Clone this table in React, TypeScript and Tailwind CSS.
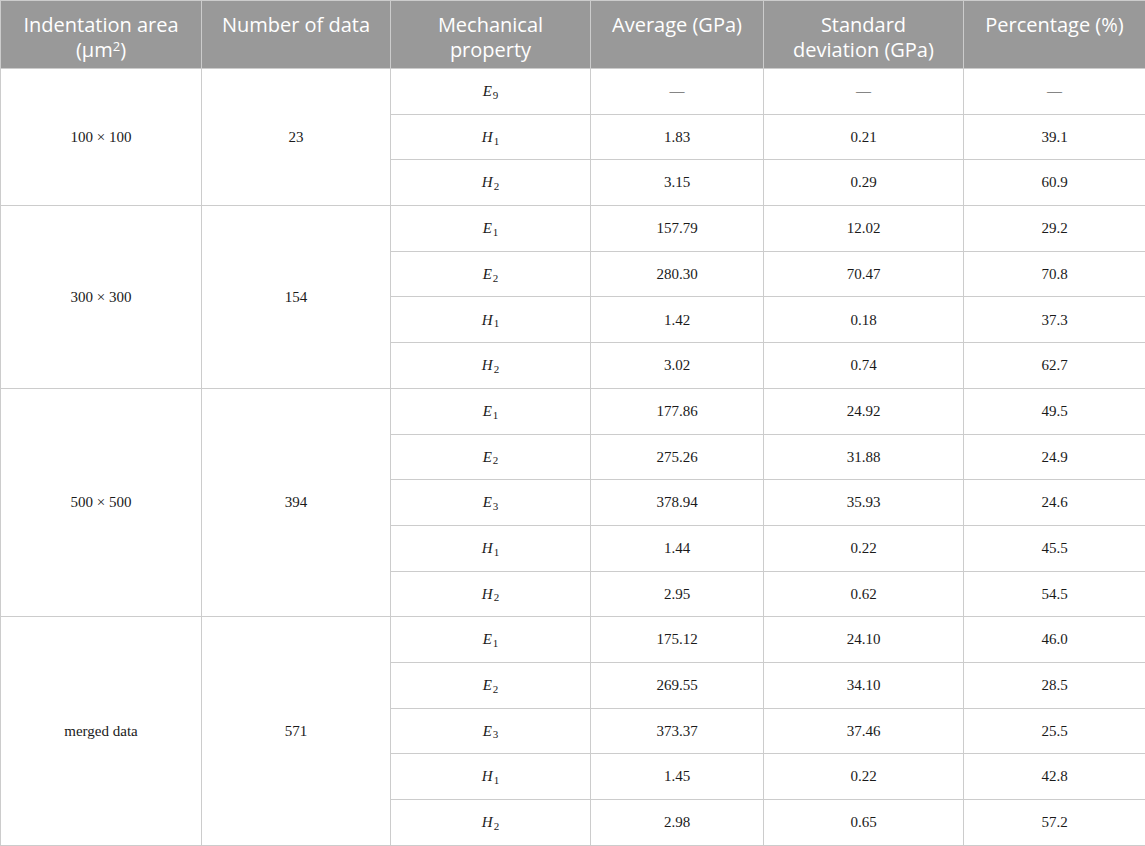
const groups = [
  {
    area: "100 × 100",
    n: "23",
    rows: [
      ["E", "9", "—", "—", "—"],
      ["H", "1", "1.83", "0.21", "39.1"],
      ["H", "2", "3.15", "0.29", "60.9"],
    ],
  },
  {
    area: "300 × 300",
    n: "154",
    rows: [
      ["E", "1", "157.79", "12.02", "29.2"],
      ["E", "2", "280.30", "70.47", "70.8"],
      ["H", "1", "1.42", "0.18", "37.3"],
      ["H", "2", "3.02", "0.74", "62.7"],
    ],
  },
  {
    area: "500 × 500",
    n: "394",
    rows: [
      ["E", "1", "177.86", "24.92", "49.5"],
      ["E", "2", "275.26", "31.88", "24.9"],
      ["E", "3", "378.94", "35.93", "24.6"],
      ["H", "1", "1.44", "0.22", "45.5"],
      ["H", "2", "2.95", "0.62", "54.5"],
    ],
  },
  {
    area: "merged data",
    n: "571",
    rows: [
      ["E", "1", "175.12", "24.10", "46.0"],
      ["E", "2", "269.55", "34.10", "28.5"],
      ["E", "3", "373.37", "37.46", "25.5"],
      ["H", "1", "1.45", "0.22", "42.8"],
      ["H", "2", "2.98", "0.65", "57.2"],
    ],
  },
];

const td = "border border-[#cccccc] text-center align-middle p-0";
const th = "border border-[#cccccc] text-center align-top font-normal px-1 pt-[11px]";

export default function App() {
  return (
    <div className="w-[1145px] bg-white">
      <table className="w-[1145px] table-fixed border-collapse">
        <colgroup>
          <col className="w-[201px]" />
          <col className="w-[189px]" />
          <col className="w-[200px]" />
          <col className="w-[173px]" />
          <col className="w-[200px]" />
          <col className="w-[182px]" />
        </colgroup>
        <thead>
          <tr className="h-[68px] bg-[#999999] text-white text-[20px] leading-[25px] font-['Open_Sans',sans-serif]">
            <th className={th}>
              Indentation area
              <br />
              (μm<sup className="text-[13px]">2</sup>)
            </th>
            <th className={th}>Number of data</th>
            <th className={th}>
              Mechanical
              <br />
              property
            </th>
            <th className={th}>Average (GPa)</th>
            <th className={th}>
              Standard
              <br />
              deviation (GPa)
            </th>
            <th className={th}>Percentage (%)</th>
          </tr>
        </thead>
        <tbody className="text-[15px] text-[#1a1a1a] font-['Liberation_Serif',serif]">
          {groups.map((g) =>
            g.rows.map((r, i) => (
              <tr key={g.area + i} className="h-[45.7px]">
                {i === 0 && (
                  <>
                    <td className={td} rowSpan={g.rows.length}>
                      {g.area}
                    </td>
                    <td className={td} rowSpan={g.rows.length}>
                      {g.n}
                    </td>
                  </>
                )}
                <td className={td}>
                  <i>{r[0]}</i>
                  <sub className="text-[11px] ml-[1px]">{r[1]}</sub>
                </td>
                <td className={td}>{r[2]}</td>
                <td className={td}>{r[3]}</td>
                <td className={td}>{r[4]}</td>
              </tr>
            ))
          )}
        </tbody>
      </table>
    </div>
  );
}
